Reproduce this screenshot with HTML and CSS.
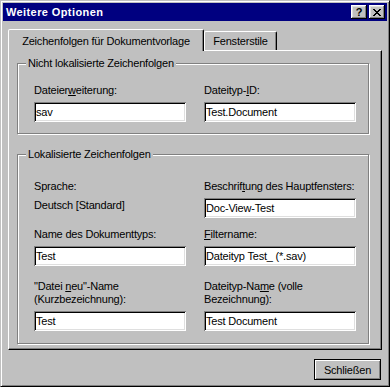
FILE: index.html
```html
<!DOCTYPE html>
<html lang="de">
<head>
    <meta charset="UTF-8">
    <title>Weitere Optionen</title>
    <link rel="stylesheet" href="styles.css">
</head>
<body>
    <div class="window">
        <div class="titlebar">
            <span class="title">Weitere Optionen</span>
            <div class="caption-buttons">
                <button class="cap-btn help">?</button>
                <button class="cap-btn close">
                    <svg width="8" height="7" viewBox="0 0 8 7" shape-rendering="crispEdges">
                        <path d="M0 0h2v1h-2zM6 0h2v1h-2zM1 1h2v1h-2zM5 1h2v1h-2zM2 2h4v1h-4zM3 3h2v1h-2zM2 4h4v1h-4zM1 5h2v1h-2zM5 5h2v1h-2zM0 6h2v1h-2zM6 6h2v1h-2z" fill="#000"/>
                    </svg>
                </button>
            </div>
        </div>

        <div class="client">
            <div class="tabs">
                <div class="tab active">Zeichenfolgen für Dokumentvorlage</div>
                <div class="tab">Fensterstile</div>
            </div>

            <div class="panel">
                <!-- Nicht lokalisierte Zeichenfolgen -->
                <fieldset class="group group-top">
                    <legend>Nicht lokalisierte Zeichenfolgen</legend>
                    <div class="grid">
                        <div class="field">
                            <label for="ext">Dateier<u>w</u>eiterung:</label>
                            <input id="ext" type="text" value="sav">
                        </div>
                        <div class="field">
                            <label for="typeId">Dateityp-<u>I</u>D:</label>
                            <input id="typeId" type="text" value="Test.Document">
                        </div>
                    </div>
                </fieldset>

                <!-- Lokalisierte Zeichenfolgen -->
                <fieldset class="group group-bottom">
                    <legend>Lokalisierte Zeichenfolgen</legend>
                    <div class="grid">
                        <div class="field">
                            <label>Sprache:</label>
                            <span class="static">Deutsch [Standard]</span>
                        </div>
                        <div class="field">
                            <label for="caption">Beschrif<u>t</u>ung des Hauptfensters:</label>
                            <input id="caption" type="text" value="Doc-View-Test">
                        </div>
                        <div class="field">
                            <label for="docName">Name des Dokumenttyps:</label>
                            <input id="docName" type="text" value="Test">
                        </div>
                        <div class="field">
                            <label for="filter"><u>F</u>iltername:</label>
                            <input id="filter" type="text" value="Dateityp Test_ (*.sav)">
                        </div>
                        <div class="field row-last">
                            <label for="newName">"Datei <u>n</u>eu"-Name<br>(Kurzbezeichnung):</label>
                            <input id="newName" type="text" value="Test">
                        </div>
                        <div class="field row-last">
                            <label for="fullName">Dateityp-Na<u>m</u>e (volle<br>Bezeichnung):</label>
                            <input id="fullName" type="text" value="Test Document">
                        </div>
                    </div>
                </fieldset>
            </div>

            <div class="footer">
                <button class="btn default">Schließen</button>
            </div>
        </div>
    </div>
</body>
</html>
```

FILE: styles.css
```css
/* Grundeinstellungen */
* {
    box-sizing: border-box;
}

body {
    margin: 0;
    background-color: #c0c0c0;
    font-family: "Liberation Sans", Arial, sans-serif;
    font-size: 11px;
    letter-spacing: -0.2px;
    color: #000;
}

/* Fensterrahmen */
.window {
    width: 390px;
    height: 387px;
    display: flex;
    flex-direction: column;
    padding: 2px;
    border: 1px solid;
    border-color: #c0c0c0 #000 #000 #c0c0c0;
    box-shadow: inset 1px 1px #fff, inset -1px -1px #808080;
    background-color: #c0c0c0;
}

/* Titelleiste */
.titlebar {
    height: 18px;
    display: flex;
    align-items: center;
    justify-content: space-between;
    padding: 0 2px 0 3px;
    background-color: #000080;
    color: #fff;
}

.title {
    font-weight: bold;
    letter-spacing: 0.4px;
    line-height: 13px;
}

.caption-buttons {
    display: flex;
    gap: 2px;
}

.cap-btn {
    width: 16px;
    height: 14px;
    padding: 0;
    border: none;
    display: flex;
    align-items: center;
    justify-content: center;
    background-color: #c0c0c0;
    box-shadow: inset -1px -1px #000, inset 1px 1px #fff, inset -2px -2px #808080, inset 2px 2px #dfdfdf;
    font-family: inherit;
    font-size: 11px;
    font-weight: bold;
    line-height: 14px;
    color: #000;
}

/* Inhalt */
.client {
    flex: 1;
    padding: 8px 5px 0;
}

/* Registerkarten */
.tabs {
    height: 21px;
    display: flex;
    align-items: flex-end;
    position: relative;
    z-index: 1;
}

.tab {
    height: 19px;
    padding-top: 3px;
    border: 1px solid;
    border-bottom: none;
    border-color: #fff #000 transparent #fff;
    border-radius: 2px 2px 0 0;
    box-shadow: inset -1px 0 #808080;
    text-align: center;
    line-height: 13px;
    width: 73px;
}

.tab.active {
    width: 196px;
    height: 22px;
    margin-bottom: -1px;
    padding-top: 5px;
    background-color: #c0c0c0;
}

.panel {
    height: 300px;
    padding: 6px 12px 0 8px;
    border: 1px solid;
    border-color: #fff #000 #000 #fff;
    box-shadow: inset -1px -1px #808080;
}

/* Gruppenfelder */
.group {
    margin: 0;
    padding: 0 11px 0 8px;
    border: 1px solid #808080;
    box-shadow: inset 1px 1px #fff, 1px 1px #fff;
}

.group legend {
    padding: 0 2px;
    line-height: 13px;
    background-color: #c0c0c0;
}

.group-top {
    padding-bottom: 11px;
}

.group-bottom {
    margin-top: 14px;
    padding-bottom: 12px;
}

.grid {
    display: grid;
    grid-template-columns: 152px 152px;
    column-gap: 18px;
    row-gap: 10px;
    align-items: start;
    padding-left: 8px;
}

.group-top .grid {
    padding-top: 14px;
}

.group-bottom .grid {
    padding-top: 19px;
}

.field {
    display: flex;
    flex-direction: column;
}

.field label {
    line-height: 13px;
}

.row-last {
    margin-top: 4px;
}

.static {
    margin-top: 6px;
    line-height: 13px;
}

/* Eingabefelder */
input {
    width: 152px;
    height: 20px;
    margin-top: 5px;
    padding: 0 2px;
    border: none;
    outline: none;
    background-color: #fff;
    box-shadow: inset 1px 1px #808080, inset -1px -1px #fff, inset 2px 2px #000, inset -2px -2px #dfdfdf;
    font-family: inherit;
    font-size: 11px;
    letter-spacing: inherit;
    color: #000;
}

/* Schaltfläche */
.footer {
    display: flex;
    justify-content: flex-end;
    margin-top: 9px;
    padding-right: 1px;
}

.btn {
    width: 67px;
    height: 21px;
    padding: 0;
    border: 1px solid #000;
    background-color: #c0c0c0;
    box-shadow: inset 1px 1px #fff, inset -1px -1px #808080;
    font-family: inherit;
    font-size: 11px;
    letter-spacing: inherit;
    color: #000;
}
```
